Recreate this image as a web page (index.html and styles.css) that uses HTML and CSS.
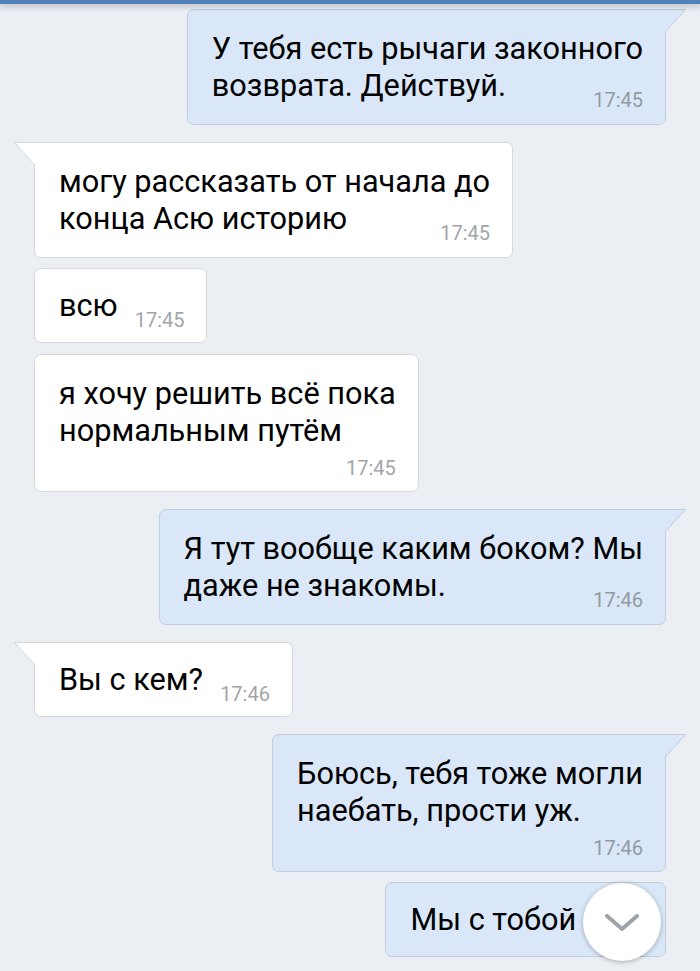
FILE: index.html
```html
<!DOCTYPE html>
<html lang="ru">
<head>
<meta charset="utf-8">
<title>Диалог</title>
<link rel="stylesheet" href="styles.css">
</head>
<body>
<div class="topbar"></div>
<div class="chat">

  <div class="msg out tail gap-first">
    <div class="bubble">
      <svg class="tail-svg" width="24" height="26" viewBox="0 0 24 26"><polygon points="0,0 21,0 1,22 0,22" /><path d="M0 0.5 H20.5 L1 22" /></svg>
      <div class="line">У тебя есть рычаги законного</div>
      <div class="line last"><span>возврата. Действуй.</span><span class="time">17:45</span></div>
    </div>
  </div>

  <div class="msg in tail gap-new">
    <div class="bubble">
      <svg class="tail-svg" width="24" height="26" viewBox="0 0 24 26"><polygon points="24,0 3,0 23,22 24,22" /><path d="M24 0.5 H3.5 L23 22" /></svg>
      <div class="line">могу рассказать от начала до</div>
      <div class="line last"><span>конца Асю историю</span><span class="time">17:45</span></div>
    </div>
  </div>

  <div class="msg in gap-same">
    <div class="bubble single">
      <div class="line last"><span>всю</span><span class="time">17:45</span></div>
    </div>
  </div>

  <div class="msg in gap-same2">
    <div class="bubble has-row">
      <div class="line">я хочу решить всё пока</div>
      <div class="line">нормальным путём</div>
      <div class="time-row"><span class="time">17:45</span></div>
    </div>
  </div>

  <div class="msg out tail gap-new2">
    <div class="bubble">
      <svg class="tail-svg" width="24" height="26" viewBox="0 0 24 26"><polygon points="0,0 21,0 1,22 0,22" /><path d="M0 0.5 H20.5 L1 22" /></svg>
      <div class="line">Я тут вообще каким боком? Мы</div>
      <div class="line last"><span>даже не знакомы.</span><span class="time">17:46</span></div>
    </div>
  </div>

  <div class="msg in tail gap-new2">
    <div class="bubble single">
      <svg class="tail-svg" width="24" height="26" viewBox="0 0 24 26"><polygon points="24,0 3,0 23,22 24,22" /><path d="M24 0.5 H3.5 L23 22" /></svg>
      <div class="line last"><span>Вы с кем?</span><span class="time">17:46</span></div>
    </div>
  </div>

  <div class="msg out tail gap-new2">
    <div class="bubble has-row">
      <svg class="tail-svg" width="24" height="26" viewBox="0 0 24 26"><polygon points="0,0 21,0 1,22 0,22" /><path d="M0 0.5 H20.5 L1 22" /></svg>
      <div class="line">Боюсь, тебя тоже могли</div>
      <div class="line">наебать, прости уж.</div>
      <div class="time-row"><span class="time">17:46</span></div>
    </div>
  </div>

  <div class="msg out gap-same">
    <div class="bubble single">
      <div class="line last"><span>Мы с тобой</span><span class="time">17:46</span></div>
    </div>
  </div>

</div>

<button class="scroll-down" type="button" aria-label="Вниз">
  <svg width="34" height="18" viewBox="0 0 34 18"><path d="M2 2 L17 15 L32 2" fill="none" stroke="#9ea3aa" stroke-width="4" stroke-linecap="round" stroke-linejoin="round"/></svg>
</button>
</body>
</html>
```

FILE: styles.css
```css
html, body {
  margin: 0;
  padding: 0;
}

body {
  width: 700px;
  height: 971px;
  overflow: hidden;
  background: #ebeef2;
  font-family: Roboto, "Noto Sans", "DejaVu Sans", sans-serif;
  color: #000;
  position: relative;
}

.topbar {
  height: 4px;
  background: #5181b8;
  box-shadow: 0 2px 6px rgba(40, 60, 90, 0.35);
  position: relative;
  z-index: 2;
}

.chat {
  display: flex;
  flex-direction: column;
  padding: 5px 34px 0;
}

.msg {
  display: flex;
}

.msg.out {
  justify-content: flex-end;
}

.msg.in {
  justify-content: flex-start;
}

.gap-first { margin-top: 0; }
.gap-new { margin-top: 17px; }
.gap-new2 { margin-top: 17px; }
.gap-same { margin-top: 10px; }
.gap-same2 { margin-top: 11px; }

.bubble {
  position: relative;
  border: 1px solid #d3d8de;
  border-radius: 7px;
  padding: 20px 22px 20px 24px;
  font-size: 30.7px;
  line-height: 37px;
  white-space: nowrap;
}

.bubble.single {
  padding-top: 18px;
  padding-bottom: 18px;
}

.bubble.has-row {
  padding-bottom: 13px;
}

.out .bubble {
  background: #d9e7f8;
  border-color: #bfcddc;
}

.in .bubble {
  background: #ffffff;
  border-color: #d5d9df;
}

.out.tail .bubble {
  border-top-right-radius: 0;
}

.in.tail .bubble {
  border-top-left-radius: 0;
}

.tail-svg {
  position: absolute;
  top: -1px;
  overflow: visible;
}

.out .tail-svg {
  left: 100%;
}

.in .tail-svg {
  right: 100%;
}

.out .tail-svg polygon { fill: #d9e7f8; }
.out .tail-svg path { fill: none; stroke: #bfcddc; stroke-width: 1; }
.in .tail-svg polygon { fill: #ffffff; }
.in .tail-svg path { fill: none; stroke: #d5d9df; stroke-width: 1; }

.line.last {
  display: flex;
  align-items: flex-end;
  justify-content: space-between;
  gap: 17px;
}

.time {
  font-size: 20px;
  line-height: 20px;
  margin-bottom: -6px;
  color: #939aa2;
}

.in .time {
  color: #a2a5a9;
}

.time-row {
  margin-top: 9px;
  display: flex;
  justify-content: flex-end;
  line-height: 20px;
}

.time-row .time {
  margin-bottom: 0;
}

.scroll-down {
  position: absolute;
  left: 583px;
  top: 883px;
  width: 78px;
  height: 78px;
  padding: 0;
  border: none;
  border-radius: 50%;
  background: #ffffff;
  box-shadow: 0 1px 5px rgba(0, 0, 0, 0.28);
  display: flex;
  align-items: center;
  justify-content: center;
}

.scroll-down svg {
  margin-top: 2px;
}
```
